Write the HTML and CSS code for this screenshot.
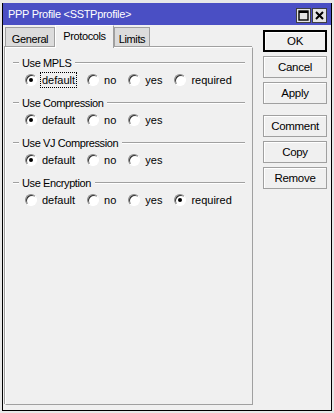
FILE: index.html
```html
<!DOCTYPE html>
<html lang="en">
  <head>
    <title>PPP Profile</title>
    <link rel="stylesheet" href="styles.css">
  </head>
  <body>
    <div class="window">
      <div class="frame">
        <div class="titlebar">
          <span class="title">PPP Profile &lt;SSTPprofile&gt;</span>
          <div class="win-btns">
            <span class="win-btn">
              <svg width="11" height="11" viewBox="0 0 11 11">
                <rect x="1" y="1" width="9" height="9" fill="none" stroke="#000" stroke-width="1.4" />
                <rect x="1" y="1" width="9" height="2" fill="#000" />
              </svg>
            </span>
            <span class="win-btn">
              <svg width="11" height="11" viewBox="0 0 11 11">
                <path d="M2 2 L9 9 M9 2 L2 9" stroke="#000" stroke-width="2" />
              </svg>
            </span>
          </div>
        </div>

        <div class="content">
          <div class="tab-area">
            <div class="tabs">
              <div class="tab tab-general">General</div>
              <div class="tab tab-protocols active">Protocols</div>
              <div class="tab tab-limits">Limits</div>
            </div>
            <div class="panel">
              <div class="group">
                <div class="group-title"><span>Use MPLS</span></div>
                <div class="options">
                  <label class="option"><span class="radio checked"></span><span class="label focus">default</span></label>
                  <label class="option"><span class="radio"></span><span class="label">no</span></label>
                  <label class="option"><span class="radio"></span><span class="label">yes</span></label>
                  <label class="option"><span class="radio"></span><span class="label">required</span></label>
                </div>
              </div>
              <div class="group">
                <div class="group-title"><span>Use Compression</span></div>
                <div class="options">
                  <label class="option"><span class="radio checked"></span><span class="label">default</span></label>
                  <label class="option"><span class="radio"></span><span class="label">no</span></label>
                  <label class="option"><span class="radio"></span><span class="label">yes</span></label>
                </div>
              </div>
              <div class="group">
                <div class="group-title"><span>Use VJ Compression</span></div>
                <div class="options">
                  <label class="option"><span class="radio checked"></span><span class="label">default</span></label>
                  <label class="option"><span class="radio"></span><span class="label">no</span></label>
                  <label class="option"><span class="radio"></span><span class="label">yes</span></label>
                </div>
              </div>
              <div class="group">
                <div class="group-title"><span>Use Encryption</span></div>
                <div class="options">
                  <label class="option"><span class="radio"></span><span class="label">default</span></label>
                  <label class="option"><span class="radio"></span><span class="label">no</span></label>
                  <label class="option"><span class="radio"></span><span class="label">yes</span></label>
                  <label class="option"><span class="radio checked"></span><span class="label">required</span></label>
                </div>
              </div>
            </div>
          </div>

          <div class="side">
            <button class="btn default">OK</button>
            <button class="btn">Cancel</button>
            <button class="btn">Apply</button>
            <button class="btn spaced">Comment</button>
            <button class="btn">Copy</button>
            <button class="btn">Remove</button>
          </div>
        </div>
      </div>
    </div>
  </body>
</html>
```

FILE: styles.css
```css
body {
  margin: 0;
  font-family: "Liberation Sans", Arial, sans-serif;
  font-size: 11px;
  letter-spacing: -0.4px;
  color: #000;
  background-color: #f0f0f0;
}

.window {
  width: 334px;
  height: 413px;
  box-sizing: border-box;
  padding: 3px 2px 2px 2px;
  background-color: #e8e8e8;
}

.frame {
  height: 100%;
  box-sizing: border-box;
  border-left: 1px solid #000;
  border-right: 1px solid #000;
  border-bottom: 1px solid #000;
  background-color: #f0f0f0;
  display: flex;
  flex-direction: column;
}

.titlebar {
  height: 22px;
  background-color: #4a4fc4;
  display: flex;
  align-items: center;
  justify-content: space-between;
  padding: 0 4px 0 5px;
}

.title {
  color: #fff;
  font-size: 11px;
  letter-spacing: -0.3px;
  margin-top: -1px;
}

.win-btns {
  display: flex;
  gap: 1px;
  margin-top: 3px;
}

.win-btn {
  width: 13px;
  height: 13px;
  background-color: #e4e4e4;
  border: 1px solid #404040;
  display: flex;
  align-items: center;
  justify-content: center;
}

.content {
  flex: 1;
  display: flex;
  padding: 0 4px 5px 2px;
}

.tab-area {
  width: 248px;
  display: flex;
  flex-direction: column;
}

.tabs {
  display: flex;
  height: 22px;
  align-items: flex-end;
}

.tab {
  height: 20px;
  box-sizing: border-box;
  padding-top: 5px;
  text-align: center;
  background-color: #dcdcdc;
  border: 1px solid #a0a0a0;
  border-bottom: none;
}

.tab-general {
  width: 50px;
}

.tab-protocols {
  width: 59px;
}

.tab-limits {
  width: 36px;
}

.tab.active {
  height: 23px;
  padding-top: 4px;
  background-color: #f0f0f0;
  border-top-color: #fff;
  border-left-color: #fff;
  margin-bottom: -1px;
  position: relative;
  z-index: 1;
}

.panel {
  flex: 1;
  border: 1px solid #a0a0a0;
  border-top-color: #fff;
  border-left-color: #fff;
  box-shadow: -1px -1px 0 #a0a0a0;
  padding: 8px 7px 0 7px;
}

.group {
  height: 40px;
}

.group-title {
  display: flex;
  align-items: center;
  height: 14px;
}

.group-title::before,
.group-title::after {
  content: "";
  height: 1px;
  background-color: #a0a0a0;
  border-bottom: 1px solid #fff;
}

.group-title::before {
  width: 6px;
  margin-right: 3px;
}

.group-title::after {
  flex: 1;
  margin-left: 4px;
}

.options {
  display: flex;
  margin-top: 3px;
  padding-left: 12px;
  height: 14px;
  align-items: center;
}

.option {
  display: flex;
  align-items: center;
  margin-right: 12px;
}

.label {
  letter-spacing: 0;
}

.radio {
  width: 12px;
  height: 12px;
  box-sizing: border-box;
  border-radius: 50%;
  background-color: #fff;
  border: 1px solid;
  border-color: #8a8a8a #fff #fff #8a8a8a;
  box-shadow: inset 1px 1px 0 #303030;
  margin-right: 5px;
  position: relative;
}

.radio.checked::after {
  content: "";
  position: absolute;
  left: 3px;
  top: 3px;
  width: 4px;
  height: 4px;
  border-radius: 50%;
  background-color: #000;
}

.label.focus {
  outline: 1px dotted #000;
  outline-offset: 1px;
}

.side {
  flex: 1;
  display: flex;
  flex-direction: column;
  align-items: flex-end;
  padding-top: 5px;
}

.btn {
  width: 64px;
  height: 22px;
  margin-bottom: 4px;
  font-family: "Liberation Sans", Arial, sans-serif;
  font-size: 11.5px;
  letter-spacing: -0.3px;
  color: #000;
  background-color: #f0f0f0;
  border: 1px solid #a0a0a0;
  box-shadow: inset 1px 1px 0 #fff;
  padding: 0;
}

.btn.default {
  border: 2px solid #000;
}

.btn.spaced {
  margin-top: 7px;
}
```
